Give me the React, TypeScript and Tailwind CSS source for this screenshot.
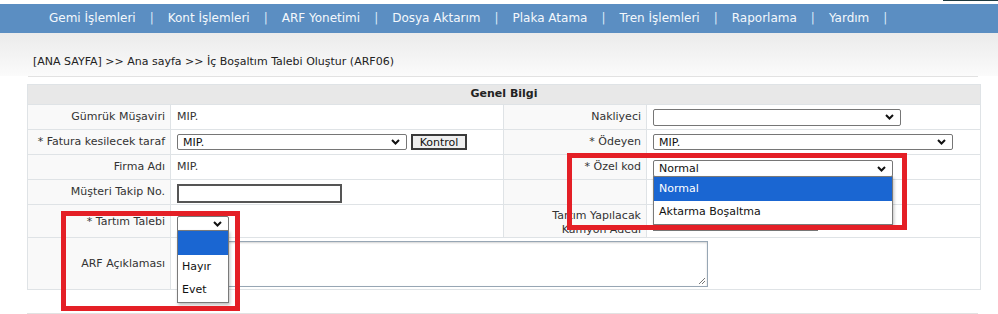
import React from "react";

const Chevron = () => (
  <svg width="9" height="6" viewBox="0 0 9 6" className="shrink-0">
    <polyline points="1,1 4.5,4.5 8,1" fill="none" stroke="#111" strokeWidth="2" />
  </svg>
);

const Select = ({ w, value, h = 17 }: { w: number; value?: string; h?: number }) => (
  <div
    className="flex items-center justify-between border border-[#767676] bg-white pl-[5px] pr-[6px] rounded-[2px]"
    style={{ width: w, height: h }}
  >
    <span className="leading-none text-[#111]">{value ?? ""}</span>
    <Chevron />
  </div>
);

const navItems = [
  "Gemi İşlemleri",
  "Kont İşlemleri",
  "ARF Yonetimi",
  "Dosya Aktarım",
  "Plaka Atama",
  "Tren İşlemleri",
  "Raporlama",
  "Yardım",
];

const Label = ({ children, className = "" }: { children?: React.ReactNode; className?: string }) => (
  <div className={`flex items-center justify-end pr-[5px] bg-[#f9f9f9] border-r border-[#dfe3e6] text-right ${className}`}>
    {children}
  </div>
);

const Value = ({ children, className = "" }: { children?: React.ReactNode; className?: string }) => (
  <div className={`flex items-center pl-[6px] border-r border-[#dfe3e6] ${className}`}>{children}</div>
);

export default function App() {
  return (
    <div className="relative w-[998px] h-[314px] overflow-hidden bg-white font-['DejaVu_Sans',sans-serif] text-[11px] text-[#333]">
      {/* top strip */}
      <div className="h-[4px] flex justify-end">
        <div className="w-[55px] h-[1px] bg-[#1f3a40]" />
      </div>
      {/* nav */}
      <div className="h-[29px] bg-[#5b8ec2] flex items-center pl-[49px] pb-[2px] text-[12px] text-[#f4f8fc]">
        {navItems.map((n) => (
          <React.Fragment key={n}>
            <span>{n}</span>
            <span className="mx-[14px] text-[#dbe9f7]">|</span>
          </React.Fragment>
        ))}
      </div>
      {/* breadcrumb */}
      <div className="h-[43px] bg-gradient-to-b from-[#ebebeb] to-[#fbfbfb] flex items-end pl-[33px] pb-[6px]">
        <span className="text-[#222]">[ANA SAYFA] &gt;&gt; Ana sayfa &gt;&gt; İç Boşaltım Talebi Oluştur (ARF06)</span>
      </div>
      <div className="ml-[28px] w-[950px] h-[1px] bg-[#e2e2e2]" />
      {/* table */}
      <div className="mt-[7px] ml-[27px] w-[954px] border border-[#dfe3e6] border-b-0">
        <div className="h-[20px] bg-[#e8e8e8] border-b border-[#dfe3e6] flex items-center justify-center font-bold text-[#222]">
          Genel Bilgi
        </div>
        <div className="grid grid-cols-[143px_333px_143px_1fr] h-[25px] border-b border-[#dfe3e6]">
          <Label>Gümrük Müşaviri</Label>
          <Value>MIP.</Value>
          <Label>Nakliyeci</Label>
          <Value className="border-r-0">
            <Select w={248} />
          </Value>
        </div>
        <div className="grid grid-cols-[143px_333px_143px_1fr] h-[25px] border-b border-[#dfe3e6]">
          <Label>* Fatura kesilecek taraf</Label>
          <Value>
            <Select w={230} h={16} value="MIP." />
            <div className="ml-[4px] w-[56px] h-[16px] border-2 border-[#3a3a3a] bg-[#efefef] flex items-center justify-center text-[#111] leading-none">
              Kontrol
            </div>
          </Value>
          <Label>* Ödeyen</Label>
          <Value className="border-r-0">
            <Select w={300} h={16} value="MIP." />
          </Value>
        </div>
        <div className="grid grid-cols-[143px_333px_143px_1fr] h-[25px] border-b border-[#dfe3e6]">
          <Label>Firma Adı</Label>
          <Value>MIP.</Value>
          <Label>* Özel kod</Label>
          <Value className="border-r-0 relative">
            <div className="mt-[3px]">
              <Select w={240} value="Normal" />
            </div>
          </Value>
        </div>
        <div className="grid grid-cols-[143px_333px_143px_1fr] h-[25px] border-b border-[#dfe3e6]">
          <Label>Müşteri Takip No.</Label>
          <Value>
            <div className="w-[165px] h-[19px] border-2 border-[#555] bg-white mt-[2px]" />
          </Value>
          <Label />
          <Value className="border-r-0" />
        </div>
        <div className="grid grid-cols-[143px_333px_143px_1fr] h-[33px] border-b border-[#dfe3e6]">
          <Label className="pt-[2px]">* Tartım Talebi</Label>
          <Value>
            <div className="mt-[5px]">
              <Select w={52} h={16} />
            </div>
          </Value>
          <Label className="leading-[14px] pt-[3px]">
            <span>
              Tartım Yapılacak
              <br />
              Kamyon Adedi
            </span>
          </Label>
          <Value className="border-r-0 items-start">
            <div className="mt-[8px] w-[165px] h-[18px] border border-[#767676] bg-white" />
          </Value>
        </div>
        <div className="grid grid-cols-[143px_1fr] h-[52px] border-b border-[#dfe3e6]">
          <Label className="pt-[2px]">ARF Açıklaması</Label>
          <div className="flex items-center pl-[6px]">
            <div className="relative w-[531px] h-[46px] border border-[#97a6b4] bg-white shadow-[inset_0_1px_2px_rgba(0,0,0,0.18)]">
              <svg width="8" height="8" viewBox="0 0 8 8" className="absolute right-[1px] bottom-[1px]">
                <line x1="7" y1="1" x2="1" y2="7" stroke="#777" strokeWidth="1" />
                <line x1="7" y1="4" x2="4" y2="7" stroke="#777" strokeWidth="1" />
              </svg>
            </div>
          </div>
        </div>
      </div>
      <div className="mt-[23px] ml-[27px] w-[951px] h-[1px] bg-[#e2e2e2]" />

      {/* Özel kod dropdown list */}
      <div className="absolute left-[653px] top-[176px] w-[240px] border border-[#7a7a7a] bg-white shadow-[1px_2px_3px_rgba(0,0,0,0.25)] text-[#111]">
        <div className="h-[24px] bg-[#1a66d2] text-white flex items-center pl-[5px]">Normal</div>
        <div className="h-[23px] flex items-center pl-[5px]">Aktarma Boşaltma</div>
      </div>
      {/* Tartım dropdown list */}
      <div className="absolute left-[177px] top-[230px] w-[52px] border border-[#7a7a7a] bg-white shadow-[1px_2px_3px_rgba(0,0,0,0.25)] text-[#111]">
        <div className="h-[24px] bg-[#1a66d2]" />
        <div className="h-[24px] flex items-center pl-[4px]">Hayır</div>
        <div className="h-[23px] flex items-center pl-[4px]">Evet</div>
      </div>

      {/* red highlight boxes */}
      <div className="absolute left-[567px] top-[153px] w-[340px] h-[77px] border-[5px] border-[#e41f26]" />
      <div className="absolute left-[61px] top-[211px] w-[179px] h-[100px] border-[5px] border-[#e41f26]" />
    </div>
  );
}
